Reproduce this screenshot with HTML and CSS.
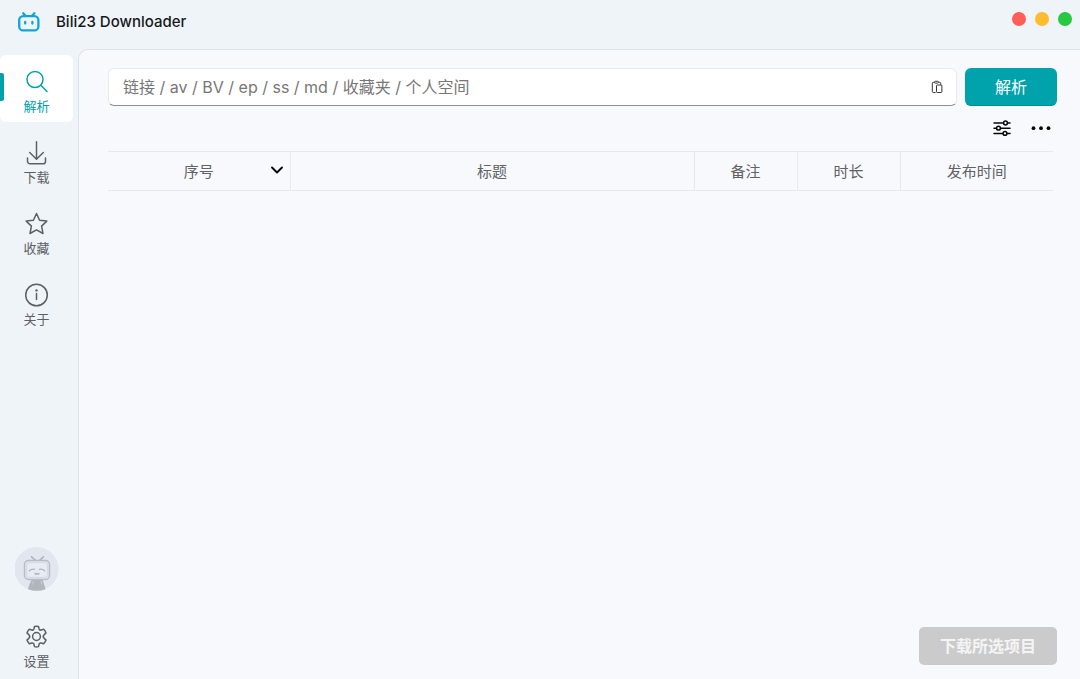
FILE: index.html
```html
<!DOCTYPE html>
<html lang="zh-CN">
<head>
<meta charset="utf-8">
<title>Bili23 Downloader</title>
<link rel="stylesheet" href="styles.css">
</head>
<body>
<div class="app">
  <header class="titlebar">
    <svg class="logo" viewBox="0 0 22 20" fill="none" stroke="#12a5d8" stroke-width="2.3" stroke-linecap="round" aria-hidden="true">
      <rect x="1.2" y="4.2" width="19.2" height="14.2" rx="4"/>
      <path d="M5.200 1.300l2.600 2.700M16.400 1.300L13.800 4M7.200 10v1.600M14.400 10v1.600"/>
    </svg>
    <h1 class="app-name">Bili23 Downloader</h1>
    <div class="window-controls">
      <button class="dot dot-red" type="button" aria-label="关闭"></button>
      <button class="dot dot-yellow" type="button" aria-label="最小化"></button>
      <button class="dot dot-green" type="button" aria-label="最大化"></button>
    </div>
  </header>
  <nav class="sidebar">
    <button class="nav-item active" type="button">
      <svg class="nav-icon" viewBox="0 0 24 24" aria-hidden="true"><circle cx="10" cy="9.500" r="8"/><path d="M15.800 15.300L22 21.500"/></svg>
      <span>解析</span>
    </button>
    <button class="nav-item" type="button">
      <svg class="nav-icon" viewBox="0 0 24 24" aria-hidden="true"><path d="M11.500 .8V18M4.700 11.500l6.800 6.800 6.800-6.800M2.500 17v3.200a2.600 2.600 0 0 0 2.600 2.600h12.800a2.600 2.600 0 0 0 2.600-2.600V17"/></svg>
      <span>下载</span>
    </button>
    <button class="nav-item" type="button">
      <svg class="nav-icon" viewBox="0 0 24 24" aria-hidden="true"><path d="M11.500 1.500l3.100 6.700 7.200.9-5.200 5 1.400 7.400-6.500-3.700L5 21.500l1.400-7.400-5.200-5 7.200-.9z"/></svg>
      <span>收藏</span>
    </button>
    <button class="nav-item" type="button">
      <svg class="nav-icon" viewBox="0 0 24 24" aria-hidden="true"><circle cx="11.500" cy="12" r="10.800"/><path d="M11.500 10.600v5.900"/><circle class="solid" cx="11.500" cy="7.400" r="1.200"/></svg>
      <span>关于</span>
    </button>
    <button class="avatar" type="button" aria-label="账号">
      <svg viewBox="0 0 44 44" aria-hidden="true">
        <circle cx="21.500" cy="22" r="22" fill="#e1e6ef"/>
        <path d="M16.500 33h11c1 3 2.400 6.500 3 9.200q-9 3.200-17.500 0c.8-3 2-6.200 3.500-9.200z" fill="#b1b6bd"/>
        <path d="M18.500 34l-.8 3.500M26 34l.8 3.500" stroke="#cbd0d8"/>
        <path d="M16.500 9.800l4 3.500M28.500 9.800l-4 3.500" stroke="#b0b5bd" stroke-width="1.600" stroke-linecap="round"/>
        <rect x="9.500" y="13.500" width="25" height="19" rx="4" fill="#e0e5ed" stroke="#b7bcc5" stroke-width="1.400"/>
        <rect x="11.700" y="15.600" width="20.600" height="14.800" rx="2.500" fill="#e7ebf2" stroke="#d0d5dc" stroke-width=".8"/>
        <path d="M14.500 23.700q2-2 5-1.400M29.500 23.700q-2-2-5-1.400M20 26.500q1 1.200 2 0 1 1.200 2 0" fill="none" stroke="#afb4bd" stroke-width="1.300" stroke-linecap="round"/>
      </svg>
    </button>
    <button class="nav-item" type="button">
      <svg class="nav-icon" viewBox="0 0 24 24" aria-hidden="true"><path d="M9.500 1.500q2-.6 4 0l.6 2.500q.5 1.500 2 1l2.600-.7q1.600 1.500 2.300 3.600L19 9.900q-1.500 1.600 0 3.200l2 2q-.7 2.200-2.300 3.700l-2.600-.8q-1.500-.4-2 1l-.6 2.600q-2 .6-4 0L8.900 19q-.5-1.400-2-1l-2.600.8Q2.700 17.300 2 15.100l2-2q1.500-1.600 0-3.200l-2-2q.7-2.100 2.300-3.600L6.900 5q1.500.5 2-1z"/><circle cx="11.500" cy="11.500" r="3.900"/></svg>
      <span>设置</span>
    </button>
  </nav>
  <main class="content">
    <form class="search-row">
      <div class="search-box">
        <input class="search-input" type="text" aria-label="链接" placeholder="链接 / av / BV / ep / ss / md / 收藏夹 / 个人空间">
        <button class="icon-button" type="button" aria-label="粘贴">
          <svg width="12" height="14" viewBox="0 0 12 14" fill="none" stroke="#333" stroke-width="1" aria-hidden="true"><path d="M4.500 12.500H2.300a1 1 0 0 1-1-1V3.300a1 1 0 0 1 1-1h1.200M7.500 2.300h1.200a1 1 0 0 1 1 1v1.500"/><rect x="3.500" y="1.300" width="4" height="1.800" rx=".9"/><rect x="5.500" y="5" width="5.400" height="7.500" rx=".8"/></svg>
        </button>
      </div>
      <button class="primary" type="button">解析</button>
    </form>
    <div class="toolbar">
      <button class="icon-button" type="button" aria-label="筛选">
        <svg width="18" height="18" viewBox="0 0 18 18" fill="#f8f9fd" stroke="#080808" stroke-width="1.500" stroke-linecap="round" aria-hidden="true"><path d="M1 4h16M1 9.200h16M1 14.400h16"/><circle cx="12.500" cy="4" r="1.900"/><circle cx="5.500" cy="9.200" r="1.900"/><circle cx="12" cy="14.400" r="1.900"/></svg>
      </button>
      <button class="icon-button" type="button" aria-label="更多">
        <svg width="20" height="18" viewBox="0 0 20 18" fill="#080808" aria-hidden="true"><circle cx="2.500" cy="9.200" r="1.900"/><circle cx="10" cy="9.200" r="1.900"/><circle cx="17.500" cy="9.200" r="1.900"/></svg>
      </button>
    </div>
    <table class="items">
      <colgroup><col class="col-index"><col><col class="col-small"><col class="col-small"><col class="col-date"></colgroup>
      <thead>
        <tr>
          <th scope="col"><div class="sortable"><span>序号</span><svg width="14" height="10" viewBox="0 0 14 10" fill="none" stroke="#080808" stroke-width="1.900" stroke-linecap="round" stroke-linejoin="round" aria-hidden="true"><path d="M2 2.500l5 5 5-5"/></svg></div></th>
          <th scope="col">标题</th>
          <th scope="col">备注</th>
          <th scope="col">时长</th>
          <th scope="col">发布时间</th>
        </tr>
      </thead>
    </table>
    <footer class="actions">
      <button class="download" type="button" disabled>下载所选项目</button>
    </footer>
  </main>
</div>
</body>
</html>
```
FILE: styles.css
```css
* {
  box-sizing: border-box;
}

body {
  margin: 0;
  color: #17191c;
  font-family: Inter, "Noto Sans CJK SC", sans-serif;
}

button {
  padding: 0;
  border: 0;
  background: none;
  color: inherit;
  font: inherit;
}

svg {
  display: block;
}

.app {
  display: grid;
  grid-template: 49px 1fr / 78px 1fr;
  min-height: 100vh;
  background: #eff4f8;
}

.titlebar {
  grid-column: 1 / -1;
  display: flex;
  align-items: center;
  padding: 0 8px 6px 18px;
}

.logo {
  width: 22px;
  height: 20px;
}

.app-name {
  flex: 1;
  margin: 0 0 0 16px;
  font-size: 15px;
  font-weight: 500;
  line-height: 20px;
}

.window-controls {
  display: flex;
  gap: 9px;
  margin-bottom: 6px;
}

.dot {
  width: 14px;
  height: 14px;
  border-radius: 50%;
}

.dot-red {
  background: #ff5f57;
}

.dot-yellow {
  background: #febc2e;
}

.dot-green {
  background: #28c840;
}

.sidebar {
  display: flex;
  flex-direction: column;
  gap: 4px;
  padding: 6px 5px 2px 0;
}

.nav-item {
  position: relative;
  display: flex;
  flex-direction: column;
  align-items: center;
  gap: 2px;
  height: 67px;
  padding-top: 15px;
  border-radius: 6px;
  color: #5c6064;
  font-size: 13px;
  line-height: 20px;
}

.nav-item.active {
  background: #fff;
  color: #00a1a9;
}

.nav-item.active::before {
  content: "";
  position: absolute;
  top: 18px;
  left: 0;
  width: 4px;
  height: 28px;
  border-radius: 0 2px 2px 0;
  background: #00a1a9;
}

.nav-icon {
  width: 24px;
  height: 24px;
  fill: none;
  stroke: currentColor;
  stroke-width: 1.5;
  stroke-linecap: round;
  stroke-linejoin: round;
}

.nav-icon .solid {
  fill: currentColor;
  stroke: none;
}

.avatar {
  width: 44px;
  height: 44px;
  margin: auto auto 15px;
}

.content {
  display: flex;
  flex-direction: column;
  min-width: 0;
  padding: 18px 23px 14px 29px;
  border: solid #dde3ec;
  border-width: 1px 0 0 1px;
  border-radius: 10px 0 0 0;
  background: #f8f9fd;
}

.search-row {
  display: flex;
  gap: 8px;
}

.search-box {
  flex: 1;
  display: flex;
  align-items: center;
  height: 38px;
  padding: 0 13px 0 14px;
  border: 1px solid #e8eaee;
  border-bottom-color: #8d9093;
  border-radius: 6px;
  background: #fff;
}

.search-input {
  flex: 1;
  min-width: 0;
  padding: 0;
  border: 0;
  outline: 0;
  background: none;
  font: inherit;
  font-size: 16px;
  line-height: 24px;
}

.search-input::placeholder {
  color: #777;
  opacity: 1;
}

.primary {
  width: 92px;
  height: 38px;
  padding-bottom: 2px;
  border-bottom: 1px solid #008e95;
  border-radius: 6px;
  background: #00a3ac;
  color: #fff;
  font-size: 16px;
}

.toolbar {
  display: flex;
  justify-content: flex-end;
  gap: 20px;
  margin-top: 13px;
  padding-right: 6px;
}

.items {
  width: calc(100% - 4px);
  margin-top: 14px;
  table-layout: fixed;
  border-collapse: collapse;
}

.items th {
  height: 39px;
  padding: 0 0 2px;
  border: solid #e7e9ed;
  border-width: 1px 1px 1px 0;
  color: #606265;
  font-size: 15px;
  font-weight: 400;
}

.items th:last-child {
  border-right: 0;
}

.col-index {
  width: 182px;
}

.col-small {
  width: 103px;
}

.col-date {
  width: 153px;
}

.sortable {
  display: grid;
  grid-template-columns: 20px 1fr 20px;
  align-items: center;
}

.sortable span {
  grid-column: 2;
}

.actions {
  display: flex;
  justify-content: flex-end;
  margin-top: auto;
}

.download {
  height: 38px;
  padding: 0 21px 2px;
  border-radius: 5px;
  background: #cbcbcc;
  color: #f4f4f5;
  font-size: 16px;
  font-weight: 700;
}
```
